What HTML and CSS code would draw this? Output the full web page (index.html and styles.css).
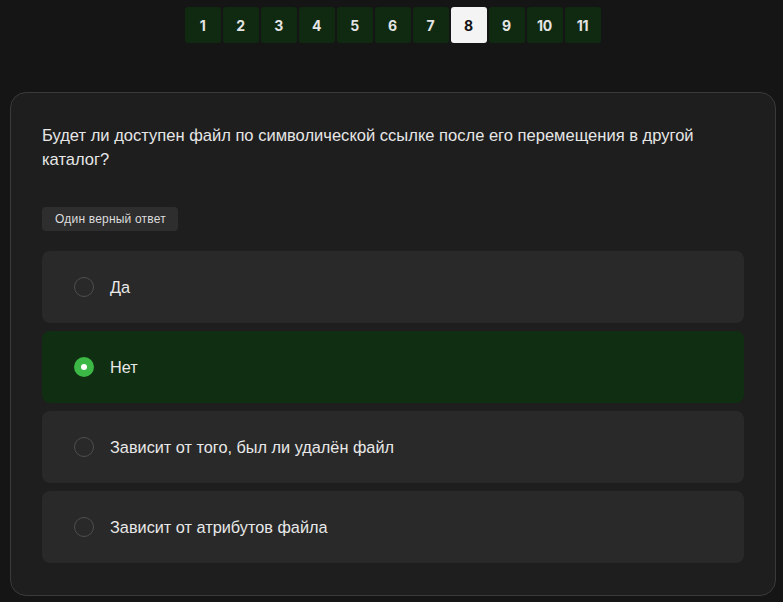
FILE: index.html
```html
<!DOCTYPE html>
<html lang="ru">
<head>
<meta charset="utf-8">
<link rel="stylesheet" href="styles.css">
</head>
<body>
<nav class="pager">
  <button class="page">1</button>
  <button class="page">2</button>
  <button class="page">3</button>
  <button class="page">4</button>
  <button class="page">5</button>
  <button class="page">6</button>
  <button class="page">7</button>
  <button class="page active">8</button>
  <button class="page">9</button>
  <button class="page">10</button>
  <button class="page">11</button>
</nav>
<section class="card">
  <p class="question">Будет ли доступен файл по символической ссылке после его перемещения в другой каталог?</p>
  <span class="tag">Один верный ответ</span>
  <div class="options">
    <div class="option"><span class="radio"></span><span class="label">Да</span></div>
    <div class="option selected"><span class="radio"></span><span class="label">Нет</span></div>
    <div class="option"><span class="radio"></span><span class="label">Зависит от того, был ли удалён файл</span></div>
    <div class="option"><span class="radio"></span><span class="label">Зависит от атрибутов файла</span></div>
  </div>
</section>
</body>
</html>
```
FILE: styles.css
```css
* { box-sizing: border-box; }
html, body { margin: 0; padding: 0; }
body {
  background: #151515;
  font-family: "Liberation Sans", Arial, sans-serif;
  color: #e6e6e6;
  width: 783px;
  height: 602px;
  overflow: hidden;
}
.pager {
  display: flex;
  justify-content: center;
  gap: 2px;
  padding-top: 7px;
  padding-left: 2px;
}
.page {
  width: 36px;
  height: 36px;
  border: none;
  border-radius: 3px;
  background: #0f2a10;
  color: #e4e4e4;
  font-family: Inter, "Noto Sans", sans-serif;
  font-weight: 700;
  font-size: 14px;
  padding: 0;
  letter-spacing: -0.3px;
}
.page.active {
  background: #f4f4f4;
  color: #111;
}
.card {
  margin: 49px 7px 0 10px;
  background: #1e1e1e;
  border: 1px solid #3a3a3a;
  border-radius: 16px;
  padding: 31px 31px 32px 31px;
  height: 504px;
}
.question {
  margin: 0;
  font-size: 16.55px;
  line-height: 24px;
  color: #e6e6e6;
  padding-right: 40px;
}
.tag {
  display: inline-block;
  margin-top: 35px;
  background: #2e2e2e;
  color: #dcdcdc;
  font-size: 12px;
  line-height: 24px;
  height: 24px;
  padding: 0 12px 0 13px;
  letter-spacing: 0.2px;
  border-radius: 4px;
}
.options {
  margin-top: 20px;
  display: flex;
  flex-direction: column;
  gap: 8px;
}
.option {
  height: 72px;
  background: #292929;
  border-radius: 8px;
  display: flex;
  align-items: center;
  padding-left: 32px;
  gap: 16px;
}
.option.selected { background: #102e11; }
.radio {
  width: 20px;
  height: 20px;
  border-radius: 50%;
  border: 1.5px solid #4e4e4e;
  flex: none;
  display: flex;
  align-items: center;
  justify-content: center;
}
.option.selected .radio {
  border: none;
  background: #3cb846;
}
.option.selected .radio::after {
  content: "";
  width: 6px;
  height: 6px;
  border-radius: 50%;
  background: #fff;
}
.label {
  font-size: 16.3px;
  color: #e8e8e8;
}
```
